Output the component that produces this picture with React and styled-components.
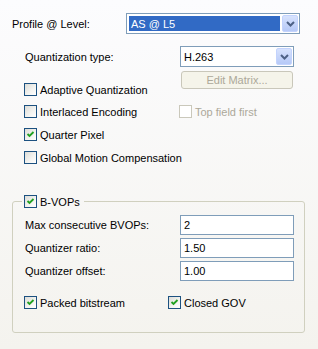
import React from 'react';
import styled, { createGlobalStyle } from 'styled-components';

const GlobalStyle = createGlobalStyle`
  body {
    margin: 0;
  }
`;

const Page = styled.div`
  width: 318px;
  height: 349px;
  box-sizing: border-box;
  padding: 13px 0 0 12px;
  background: linear-gradient(#fcfcfe, #f4f3ee);
  font-family: "Liberation Sans", Arial, sans-serif;
  font-size: 11px;
  color: #000;
  overflow: hidden;
`;

const FieldRow = styled.div`
  display: flex;
  align-items: center;
  height: ${props => props.$h || 21}px;
  margin-top: ${props => props.$mt || 0}px;
`;

const Label = styled.span`
  width: ${props => props.$w}px;
  padding-left: ${props => props.$pl || 0}px;
  box-sizing: border-box;
  flex: none;
  white-space: nowrap;
`;

const Section = styled.div`
  padding-left: 12px;
  margin-top: 12px;
`;

const Combo = styled.div`
  width: ${props => props.$w}px;
  height: 21px;
  box-sizing: border-box;
  border: 1px solid #7f9db9;
  background: #fff;
  padding: 1px;
  display: flex;
  align-items: stretch;
`;

const ComboText = styled.div`
  flex: 1;
  display: flex;
  align-items: center;
  padding-left: 2px;
  margin: ${props => (props.$selected ? '1px 2px 1px 1px' : '0')};
  background: ${props => (props.$selected ? '#316ac5' : 'transparent')};
  color: ${props => (props.$selected ? '#fff' : '#000')};
`;

const DropButton = styled.div`
  width: 16px;
  box-sizing: border-box;
  border: 1px solid #c3d3fd;
  border-radius: 2px;
  background: linear-gradient(#d7e2fd, #b6c9f7);
  display: flex;
  align-items: center;
  justify-content: center;
`;

const PushButton = styled.div`
  width: 112px;
  height: 18px;
  box-sizing: border-box;
  margin-left: 1px;
  border: 1px solid #c9c7ba;
  border-radius: 3px;
  background: #f5f4ea;
  color: #aca899;
  display: flex;
  align-items: center;
  justify-content: center;
  align-self: flex-start;
`;

const ButtonRow = styled.div`
  display: flex;
  height: 25px;
  margin-top: 4px;
`;

const CheckRow = styled.div`
  display: flex;
  align-items: center;
  height: 13px;
  margin-top: ${props => props.$mt || 0}px;
  margin-left: ${props => props.$ml || 0}px;
`;

const CheckItem = styled.label`
  display: flex;
  align-items: center;
  gap: 3px;
  height: 13px;
  width: ${props => (props.$w ? `${props.$w}px` : 'auto')};
  align-self: ${props => props.$align || 'center'};
  color: ${props => (props.$disabled ? '#aca899' : '#000')};
  white-space: nowrap;
  flex: none;
`;

const Box = styled.span`
  width: 13px;
  height: 13px;
  box-sizing: border-box;
  border: 1px solid ${props => (props.$disabled ? '#cac8bb' : '#1c5180')};
  background: ${props =>
    props.$disabled ? '#fff' : 'linear-gradient(135deg, #dcdcd7 0%, #f4f4f1 60%, #fff 100%)'};
  display: flex;
  flex: none;
`;

const Group = styled.fieldset`
  margin: 31px 0 0 0;
  padding: 0;
  width: 293px;
  box-sizing: border-box;
  border: 1px solid #d0d0bf;
  border-radius: 3px;
`;

const Legend = styled.legend`
  margin-left: 9px;
  padding: 0 4px 0 2px;
  display: flex;
  height: 13px;
`;

const GroupBody = styled.div`
  padding: 7px 10px 23px 12px;
`;

const Edit = styled.div`
  width: 114px;
  height: 20px;
  box-sizing: border-box;
  border: 1px solid #7f9db9;
  background: #fff;
  padding-left: 3px;
  display: flex;
  align-items: center;
`;

const Chevron = () => (
  <svg width="9" height="6" viewBox="0 0 9 6">
    <polyline points="1,1 4.5,4.5 8,1" fill="none" stroke="#4d6185" strokeWidth="2" />
  </svg>
);

const Check = ({ checked, disabled, children, w, align }) => (
  <CheckItem $w={w} $align={align} $disabled={disabled}>
    <Box $disabled={disabled}>
      {checked && (
        <svg width="11" height="11" viewBox="0 0 11 11">
          <polyline points="2.5,5 4.5,7 8.5,3" fill="none" stroke="#21a121" strokeWidth="1.8" />
        </svg>
      )}
    </Box>
    <span>{children}</span>
  </CheckItem>
);

const ComboBox = ({ w, value, selected }) => (
  <Combo $w={w}>
    <ComboText $selected={selected}>{value}</ComboText>
    <DropButton>
      <Chevron />
    </DropButton>
  </Combo>
);

const App = () => (
  <Page>
    <GlobalStyle />
    <FieldRow>
      <Label $w={114}>Profile @ Level:</Label>
      <ComboBox w={174} value="AS @ L5" selected />
    </FieldRow>

    <Section>
      <FieldRow>
        <Label $w={156} $pl={1}>Quantization type:</Label>
        <ComboBox w={114} value="H.263" />
      </FieldRow>
      <ButtonRow>
        <Check w={156} align="flex-end">Adaptive Quantization</Check>
        <PushButton>Edit Matrix...</PushButton>
      </ButtonRow>
      <CheckRow $mt={9}>
        <Check w={155}>Interlaced Encoding</Check>
        <Check disabled>Top field first</Check>
      </CheckRow>
      <CheckRow $mt={10}>
        <Check checked>Quarter Pixel</Check>
      </CheckRow>
      <CheckRow $mt={10}>
        <Check>Global Motion Compensation</Check>
      </CheckRow>
    </Section>

    <Group>
      <Legend>
        <Check checked>B-VOPs</Check>
      </Legend>
      <GroupBody>
        <FieldRow $h={20}>
          <Label $w={155}>Max consecutive BVOPs:</Label>
          <Edit>2</Edit>
        </FieldRow>
        <FieldRow $h={20} $mt={3}>
          <Label $w={155}>Quantizer ratio:</Label>
          <Edit>1.50</Edit>
        </FieldRow>
        <FieldRow $h={20} $mt={3}>
          <Label $w={155}>Quantizer offset:</Label>
          <Edit>1.00</Edit>
        </FieldRow>
        <CheckRow $mt={15} $ml={-1}>
          <Check checked w={144}>Packed bitstream</Check>
          <Check checked>Closed GOV</Check>
        </CheckRow>
      </GroupBody>
    </Group>
  </Page>
);

export default App;
